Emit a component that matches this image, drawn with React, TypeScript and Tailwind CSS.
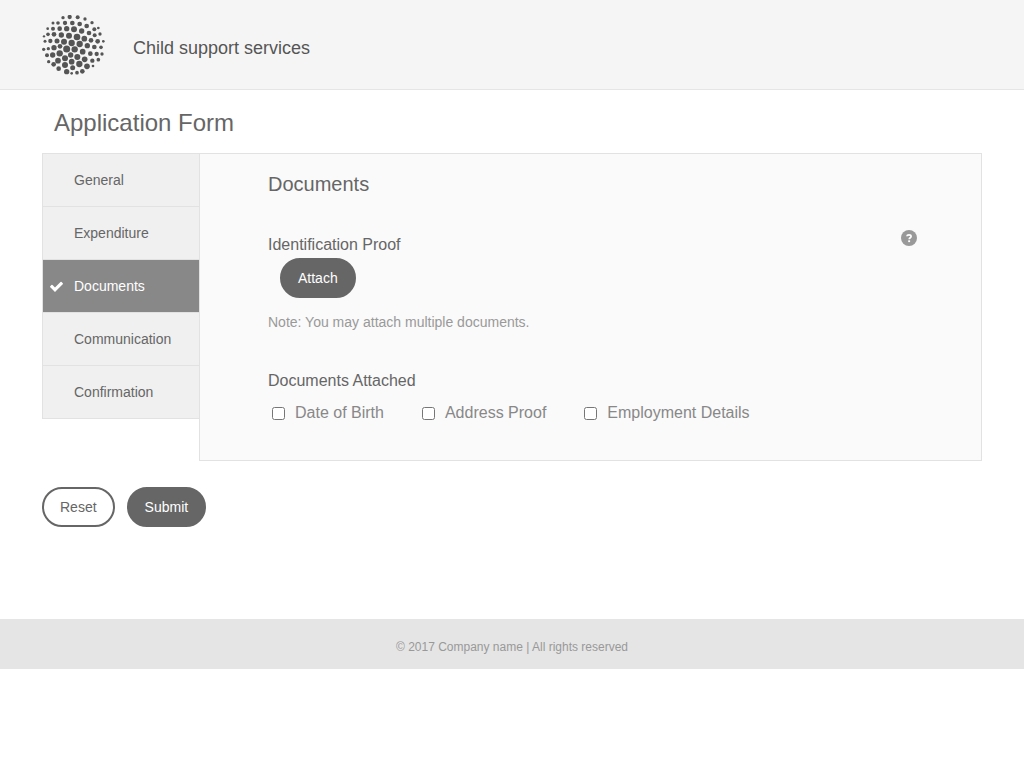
const logoDots: [number, number, number][] = [
  [75, 23, 5], [95, 21, 6.5], [119, 22, 6], [141, 27, 5],
  [45, 39, 4.5], [60, 39, 5.5], [81, 39, 6.5], [103, 39, 7], [125, 42, 7], [146, 48, 7], [162, 38, 5],
  [29, 56, 4], [45, 56, 6], [65, 56, 7], [86, 56, 8], [108, 58, 9], [131, 63, 8], [153, 69, 7], [169, 58, 6], [181, 54, 4],
  [18, 79, 3.5], [30, 73, 5.5], [48, 73, 7], [70, 75, 8], [93, 77, 9], [117, 81, 10], [139, 86, 8.5], [159, 91, 7], [170, 76, 6], [186, 72, 5],
  [21, 94, 4.5], [37, 93, 6.5], [57, 93, 7.5], [78, 95, 9], [101, 99, 9.5], [125, 102, 9.5], [148, 107, 8], [169, 111, 7], [179, 94, 7], [196, 94, 4],
  [17, 118, 5], [31, 116, 5], [48, 113, 8], [66, 109, 7], [86, 117, 10.5], [110, 118, 9.5], [134, 125, 8.5], [157, 131, 7], [176, 132, 6.5], [192, 132, 5], [189, 112, 5.5],
  [27, 136, 6], [44, 135, 8], [65, 130, 9.5], [98, 135, 8], [118, 141, 9], [140, 148, 8.5], [163, 152, 6.5], [181, 149, 5.5],
  [32, 155, 5], [60, 152, 8.5], [81, 145, 9], [101, 155, 8.5], [124, 162, 9.5], [147, 169, 8.5], [165, 168, 4],
  [47, 163, 7], [62, 176, 7], [81, 165, 9], [104, 173, 7.5], [133, 184, 7], [117, 188, 5.5],
  [86, 185, 8], [101, 190, 4],
];

const tabs = ["General", "Expenditure", "Documents", "Communication", "Confirmation"];
const attachments = ["Date of Birth", "Address Proof", "Employment Details"];

function Logo() {
  return (
    <svg viewBox="12 15 189 180" className="h-[60px] w-[63px]" role="img" aria-label="Company logo" fill="#555555">
      {logoDots.map(([cx, cy, r]) => (
        <circle key={`${cx}-${cy}`} cx={cx} cy={cy} r={r} />
      ))}
    </svg>
  );
}

function CheckIcon() {
  return (
    <svg viewBox="0 0 1792 1792" className="size-[15px] fill-white" aria-hidden="true">
      <path d="M1671 566q0 40-28 68l-724 724-136 136q-28 28-68 28t-68-28l-136-136-362-362q-28-28-28-68t28-68l136-136q28-28 68-28t68 28l294 295 656-657q28-28 68-28t68 28l136 136q28 28 28 68z" />
    </svg>
  );
}

function HelpIcon() {
  return (
    <svg viewBox="0 0 16 16" className="size-4" aria-hidden="true">
      <circle cx="8" cy="8" r="8" fill="#999999" />
      <path d="M5.900 6.300C6 5.100 6.800 4.800 8 4.800s2.100.600 2.100 1.600c0 1.400-1.900 1.300-1.900 2.900" fill="none" stroke="#ffffff" strokeWidth="1.700" />
      <rect x="7.200" y="10.300" width="1.900" height="1.800" fill="#ffffff" />
    </svg>
  );
}

export default function App() {
  return (
    <div className="font-['Liberation_Sans',Arial,sans-serif] text-[#666666]">
      <header className="flex items-center gap-7 border-b border-[#e5e5e5] bg-[#f5f5f5] px-[42px] pt-[15px] pb-[14px]">
        <Logo />
        <p className="pt-1.5 text-lg text-[#555555]">Child support services</p>
      </header>

      <main className="px-[42px] pt-4">
        <h1 className="px-3 text-2xl leading-[34px]">Application Form</h1>

        <form className="pt-[13px]" onSubmit={(event) => event.preventDefault()}>
          <div className="flex items-start">
            <nav aria-label="Form sections" className="w-[157px] shrink-0 border-t border-l border-[#e2e2e2]">
              {tabs.map((tab) => {
                const active = tab === "Documents";
                return (
                  <a
                    key={tab}
                    href={`#${tab.toLowerCase()}`}
                    aria-current={active ? "step" : undefined}
                    className={`flex h-[53px] items-center gap-2.5 border-b border-[#e2e2e2] pl-1.5 text-sm ${
                      active ? "bg-[#888888] text-white" : "bg-[#f0f0f0]"
                    }`}
                  >
                    <span className="w-[15px]">{active && <CheckIcon />}</span>
                    {tab}
                  </a>
                );
              })}
            </nav>

            <section id="documents" className="flex-1 border border-[#e2e2e2] bg-[#fafafa] pt-4 pr-16 pb-[35px] pl-[68px]">
              <h2 className="text-xl leading-7">Documents</h2>

              <div className="flex items-start justify-between pt-8">
                <div>
                  <h3 className="pt-[3px] pb-px text-base">Identification Proof</h3>
                  <button
                    type="button"
                    className="ml-3 block h-10 rounded-[20px] border-2 border-[#666666] bg-[#666666] px-4 text-sm text-white"
                  >
                    Attach
                  </button>
                  <p className="pt-[14px] text-sm text-[#999999]">Note: You may attach multiple documents.</p>
                </div>
                <button type="button" aria-label="Help">
                  <HelpIcon />
                </button>
              </div>

              <fieldset className="pt-[37px]">
                <legend className="float-left w-full text-base">Documents Attached</legend>
                <div className="clear-both flex flex-wrap gap-x-[38px] pt-2 pl-1 text-[#888888]">
                  {attachments.map((name) => (
                    <label key={name} className="flex items-center gap-2.5">
                      <input type="checkbox" className="size-[13px]" />
                      {name}
                    </label>
                  ))}
                </div>
              </fieldset>
            </section>
          </div>

          <div className="flex gap-3 pt-[26px]">
            <button type="reset" className="h-10 rounded-[20px] border-2 border-[#666666] bg-white px-4 text-sm">
              Reset
            </button>
            <button
              type="submit"
              className="h-10 rounded-[20px] border-2 border-[#666666] bg-[#666666] px-4 text-sm text-white"
            >
              Submit
            </button>
          </div>
        </form>
      </main>

      <footer className="mt-[92px] bg-[#e5e5e5] pt-5 pb-[14px] text-center text-xs text-[#999999]">
        © 2017 Company name | All rights reserved
      </footer>
    </div>
  );
}
